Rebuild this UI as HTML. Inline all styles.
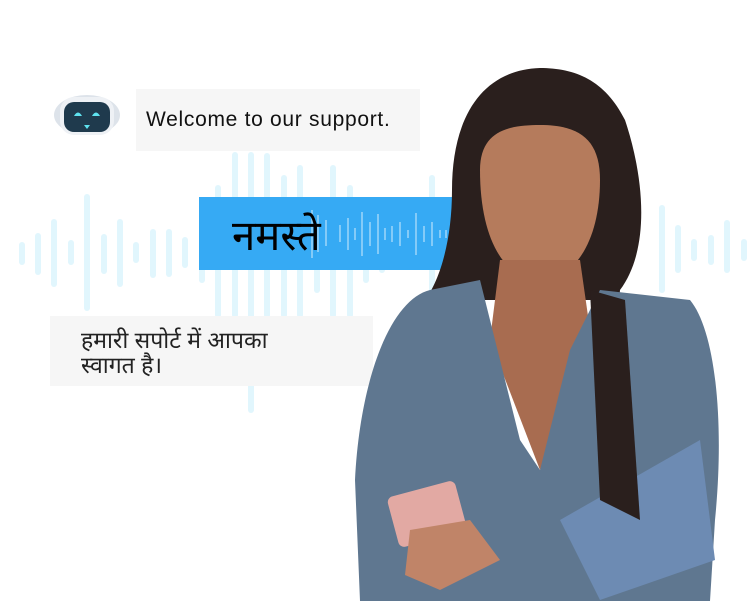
<!DOCTYPE html>
<html><head><meta charset="utf-8"><style>
body{margin:0;width:748px;height:601px;background:#fff;overflow:hidden;position:relative;font-family:"Liberation Sans",sans-serif}
.b{position:absolute}
</style></head><body>
<svg class="b" style="left:0;top:0" width="748" height="601">
<g stroke="#e1f6fd" stroke-width="6" stroke-linecap="round">
<line x1="22" y1="245" x2="22" y2="262"/><line x1="38" y1="236" x2="38" y2="272"/><line x1="54" y1="222" x2="54" y2="284"/><line x1="71" y1="243" x2="71" y2="262"/><line x1="87" y1="197" x2="87" y2="308"/><line x1="104" y1="237" x2="104" y2="271"/><line x1="120" y1="222" x2="120" y2="284"/><line x1="136" y1="245" x2="136" y2="260"/><line x1="153" y1="232" x2="153" y2="275"/><line x1="169" y1="232" x2="169" y2="274"/><line x1="185" y1="240" x2="185" y2="265"/><line x1="202" y1="240" x2="202" y2="280"/>
<line x1="218" y1="188" x2="218" y2="315"/><line x1="235" y1="155" x2="235" y2="315"/><line x1="251" y1="155" x2="251" y2="410"/><line x1="267" y1="156" x2="267" y2="315"/><line x1="284" y1="178" x2="284" y2="315"/><line x1="300" y1="168" x2="300" y2="315"/><line x1="317" y1="220" x2="317" y2="290"/><line x1="333" y1="168" x2="333" y2="315"/><line x1="350" y1="188" x2="350" y2="315"/><line x1="366" y1="240" x2="366" y2="280"/><line x1="382" y1="250" x2="382" y2="270"/><line x1="432" y1="178" x2="432" y2="315"/>
<line x1="662" y1="208" x2="662" y2="290"/><line x1="678" y1="228" x2="678" y2="270"/><line x1="694" y1="242" x2="694" y2="258"/><line x1="711" y1="238" x2="711" y2="262"/><line x1="727" y1="223" x2="727" y2="270"/><line x1="744" y1="242" x2="744" y2="258"/>
</g>
<rect x="136" y="89" width="284" height="62" fill="#f6f6f6"/>
<rect x="50" y="316" width="323" height="70" fill="#f6f6f6"/>
<rect x="199" y="197" width="262" height="73" fill="#36aaf4"/>
<g stroke="#9fd6fa" stroke-width="1.5">
<line x1="312" y1="210" x2="312" y2="258"/><line x1="318" y1="215" x2="318" y2="252"/><line x1="326" y1="220" x2="326" y2="246"/><line x1="340" y1="225" x2="340" y2="242"/><line x1="348" y1="218" x2="348" y2="250"/><line x1="355" y1="228" x2="355" y2="240"/><line x1="362" y1="212" x2="362" y2="256"/><line x1="370" y1="222" x2="370" y2="246"/><line x1="378" y1="214" x2="378" y2="254"/><line x1="385" y1="228" x2="385" y2="240"/><line x1="392" y1="226" x2="392" y2="242"/><line x1="400" y1="222" x2="400" y2="246"/><line x1="408" y1="230" x2="408" y2="238"/><line x1="416" y1="213" x2="416" y2="255"/><line x1="424" y1="226" x2="424" y2="242"/><line x1="432" y1="222" x2="432" y2="246"/><line x1="440" y1="230" x2="440" y2="238"/><line x1="446" y1="230" x2="446" y2="238"/>
</g>
<!-- robot -->
<ellipse cx="87" cy="115" rx="33" ry="20" fill="#dde3ea"/>
<rect x="60" y="97" width="54" height="38" rx="14" fill="#eef1f5"/>
<rect x="64" y="102" width="46" height="30" rx="10" fill="#1f3a4d"/>
<path d="M74 116 q4-7 8 0z M92 116 q4-7 8 0z" fill="#5fe3f0"/>
<path d="M84 125 h6 l-3 4z" fill="#5fe3f0"/>
<!-- woman -->
<path d="M540 68 C480 70 452 120 452 190 C452 240 440 280 425 300 L600 300 L660 330 L690 450 L660 520 L600 520 L620 290 C650 250 645 180 625 120 C605 80 575 68 540 68Z" fill="#2a1f1d"/>
<path d="M480 170 C480 130 510 125 540 125 C580 125 600 140 600 180 C600 240 575 280 540 280 C505 280 480 240 480 170Z" fill="#b57b5c"/>
<path d="M500 260 L580 260 L590 330 L540 470 L490 340Z" fill="#a86c50"/>
<path d="M360 601 L355 480 C360 380 390 300 430 290 L480 280 L520 440 L540 470 L570 350 L600 290 L690 300 C715 330 725 420 715 520 L710 601Z" fill="#5f7790"/>
<path d="M560 520 L700 440 L715 560 L600 600Z" fill="#6d8bb3"/>
<path d="M590 290 L625 300 L640 520 L600 500Z" fill="#2a1f1d"/>
<rect x="392" y="488" width="70" height="52" rx="6" fill="#e2a9a3" transform="rotate(-15 427 514)"/>
<path d="M410 530 L470 520 L500 560 L440 590 L405 575Z" fill="#c08468"/>
</svg>
<div class="b" style="left:146px;top:108px;font-size:21px;letter-spacing:0.7px;color:#111">Welcome to our support.</div>
<div class="b" style="left:232px;top:206px;font-size:42px;color:#000">नमस्ते</div>
<div class="b" style="left:81px;top:328px;font-size:23px;line-height:25px;color:#222">हमारी सपोर्ट में आपका<br>स्वागत है।</div>
</body></html>
